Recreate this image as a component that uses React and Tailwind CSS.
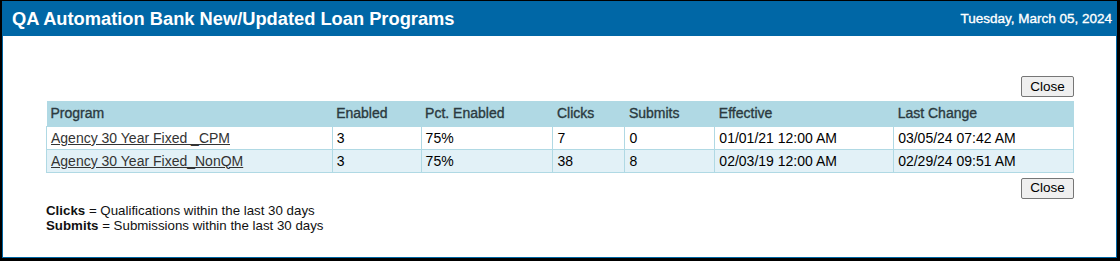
import React from "react";

const rows = [
  ["Agency 30 Year Fixed _CPM", "3", "75%", "7", "0", "01/01/21 12:00 AM", "03/05/24 07:42 AM"],
  ["Agency 30 Year Fixed_NonQM", "3", "75%", "38", "8", "02/03/19 12:00 AM", "02/29/24 09:51 AM"],
];

const cols = ["Program", "Enabled", "Pct. Enabled", "Clicks", "Submits", "Effective", "Last Change"];
const widths = ["w-[286px]", "w-[89px]", "w-[132px]", "w-[72px]", "w-[90px]", "w-[179px]", "w-[180px]"];

function CloseBtn() {
  return (
    <button className="h-[21px] w-[53px] rounded-[2px] border border-[#767676] bg-[#efefef] text-[13.5px] leading-none text-black">
      Close
    </button>
  );
}

export default function App() {
  return (
    <div
      className="h-[261px] w-[1120px] bg-black pb-[3px] pl-[2px] pr-[3px] pt-[1px]"
      style={{ fontFamily: '"Liberation Sans", Arial, sans-serif' }}
    >
      <div className="flex h-full flex-col border border-[#0066a4] bg-white">
        <div className="flex h-[34px] shrink-0 items-center justify-between bg-[#0067a6] pl-[9px] pr-[4px] text-white">
          <span className="text-[18.3px] font-bold">QA Automation Bank New/Updated Loan Programs</span>
          <span className="text-[13.5px] [-webkit-text-stroke:0.35px_white]">Tuesday, March 05, 2024</span>
        </div>
        <div className="flex flex-col pl-[43px] pr-[42px] pt-[40px]">
          <div className="flex justify-end">
            <CloseBtn />
          </div>
          <table className="mt-[4px] w-[1028px] border-collapse text-[14px]">
            <thead>
              <tr className="h-[25px] bg-[#b0d9e4] text-left">
                {cols.map((c, i) => (
                  <th
                    key={c}
                    className={`${widths[i]} px-[4px] font-normal text-[#2b3a40] [-webkit-text-stroke:0.35px_#2b3a40]`}
                  >
                    {c}
                  </th>
                ))}
              </tr>
            </thead>
            <tbody>
              {rows.map((r, ri) => (
                <tr key={ri} className={`h-[23px] ${ri === 1 ? "bg-[#e2f1f7]" : "bg-white"}`}>
                  {r.map((v, ci) => (
                    <td key={ci} className="border border-[#b0d9e4] px-[4px] leading-[16px] text-black">
                      {ci === 0 ? (
                        <a href="#" className="text-[#333] underline">
                          {v}
                        </a>
                      ) : (
                        v
                      )}
                    </td>
                  ))}
                </tr>
              ))}
            </tbody>
          </table>
          <div className="mt-[5px] flex justify-end">
            <CloseBtn />
          </div>
          <div className="mt-[4px] text-[13.3px] leading-[15px] text-[#111]">
            <div>
              <b>Clicks</b> = Qualifications within the last 30 days
            </div>
            <div>
              <b>Submits</b> = Submissions within the last 30 days
            </div>
          </div>
        </div>
      </div>
    </div>
  );
}
